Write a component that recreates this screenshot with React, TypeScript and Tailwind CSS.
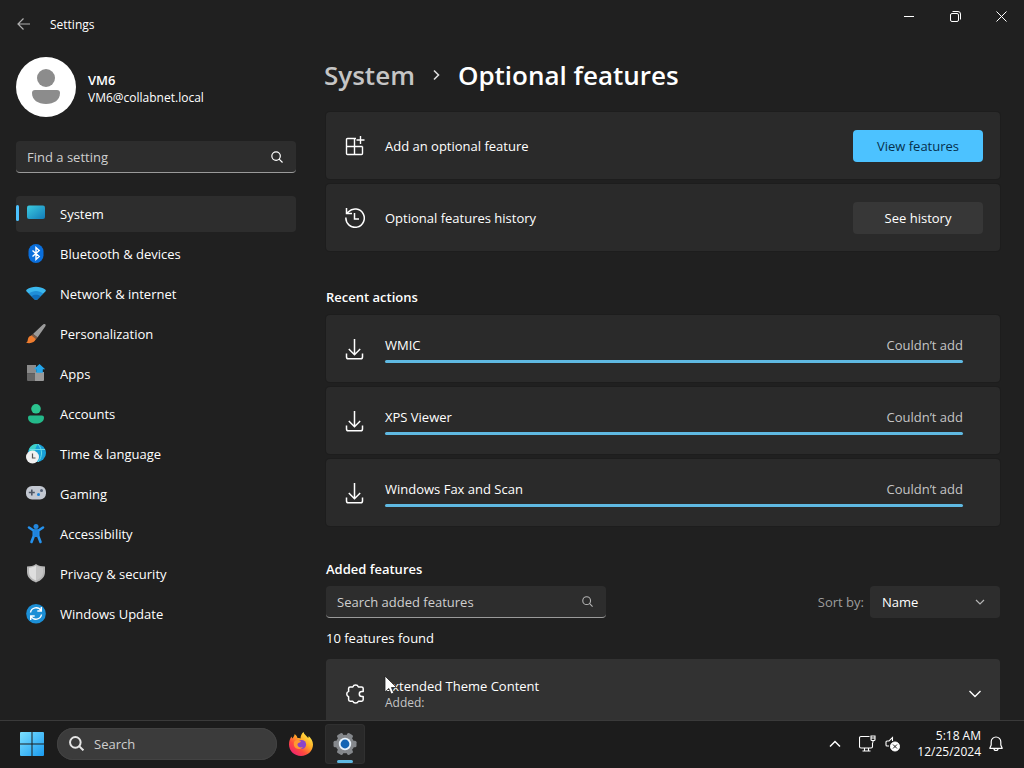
import { useState } from "react";
import type { ReactNode } from "react";

const navItems: { label: string; icon: ReactNode }[] = [
  { label: "System", icon: <SystemIcon /> },
  { label: "Bluetooth & devices", icon: <BluetoothIcon /> },
  { label: "Network & internet", icon: <NetworkIcon /> },
  { label: "Personalization", icon: <BrushIcon /> },
  { label: "Apps", icon: <AppsIcon /> },
  { label: "Accounts", icon: <AccountsIcon /> },
  { label: "Time & language", icon: <TimeIcon /> },
  { label: "Gaming", icon: <GamingIcon /> },
  { label: "Accessibility", icon: <AccessibilityIcon /> },
  { label: "Privacy & security", icon: <ShieldIcon /> },
  { label: "Windows Update", icon: <UpdateIcon /> },
];

const recentActions = ["WMIC", "XPS Viewer", "Windows Fax and Scan"];

export default function App() {
  return (
    <div className="relative flex h-screen flex-col overflow-hidden bg-[#202020] font-['Open_Sans','Noto_Sans',sans-serif] text-[13px] leading-5 text-white">
      <TitleBar />
      <div className="flex min-h-0 flex-1 gap-[30px] overflow-hidden pr-6">
        <Sidebar />
        <OptionalFeatures />
      </div>
      <Taskbar />
    </div>
  );
}

function TitleBar() {
  return (
    <header className="flex h-12 shrink-0 items-center">
      <button aria-label="Back" className="ml-1 flex h-10 w-10 items-center justify-center text-[#b0b0b0]">
        <svg width="14" height="14" viewBox="0 0 14 14" fill="none" stroke="currentColor" strokeWidth="1.2">
          <path d="M13 7H1M6.500 1.500L1 7l5.500 5.500" />
        </svg>
      </button>
      <span className="ml-[6px] pt-[2px] text-xs">Settings</span>
      <div className="ml-auto flex self-start">
        <button aria-label="Minimize" className="flex h-8 w-[46px] items-center justify-center">
          <svg width="11" height="11" viewBox="0 0 11 11" stroke="#fff">
            <path d="M0 5.500h10" />
          </svg>
        </button>
        <button aria-label="Restore" className="flex h-8 w-[46px] items-center justify-center">
          <svg width="11" height="11" viewBox="0 0 11 11" fill="none" stroke="#fff">
            <rect x="0.500" y="2.500" width="8" height="8" rx="1.500" />
            <path d="M2.500 .5h5.500a2.500 2.500 0 0 1 2.500 2.500v5.500" />
          </svg>
        </button>
        <button aria-label="Close" className="flex h-8 w-[46px] items-center justify-center">
          <svg width="11" height="11" viewBox="0 0 11 11" stroke="#fff">
            <path d="M.5 .5l10 10M10.500 .5l-10 10" />
          </svg>
        </button>
      </div>
    </header>
  );
}

function Sidebar() {
  const [active, setActive] = useState("System");

  return (
    <aside className="flex w-[296px] shrink-0 flex-col pl-4 pt-[9px]">
      <div className="flex items-center gap-3">
        <svg width="60" height="60" viewBox="0 0 60 60">
          <circle cx="30" cy="30" r="30" fill="#fff" />
          <circle cx="30" cy="21" r="9" fill="#8c8c8c" />
          <path d="M19 33h22a3 3 0 0 1 3 3c0 7-6 11-14 11s-14-4-14-11a3 3 0 0 1 3-3z" fill="#8c8c8c" />
        </svg>
        <div className="pt-[2px]">
          <p className="font-semibold">VM6</p>
          <p className="text-xs">VM6@collabnet.local</p>
        </div>
      </div>

      <SearchBox label="Find a setting" iconSize={12} className="mt-6 text-white" />

      <nav className="mt-[23px] flex flex-col gap-1">
        {navItems.map((item) => (
          <a
            key={item.label}
            href="#"
            onClick={() => setActive(item.label)}
            aria-current={active === item.label ? "page" : undefined}
            className={`relative flex h-9 items-center gap-[14px] rounded pl-[10px] ${
              active === item.label ? "bg-[#2d2d2d]" : "hover:bg-[#292929]"
            }`}
          >
            {active === item.label && (
              <span className="absolute left-0 top-[9px] h-4 w-[3px] rounded-full bg-[#4cc2ff]" />
            )}
            {item.icon}
            {item.label}
          </a>
        ))}
      </nav>
    </aside>
  );
}

function SearchBox({ label, iconSize, className }: { label: string; iconSize: number; className: string }) {
  return (
    <label
      className={`flex h-8 items-center rounded border-b border-[#9a9a9a] bg-[#2d2d2d] pl-[11px] ${className}`}
    >
      <input
        aria-label={label}
        placeholder={label}
        className="min-w-0 flex-1 bg-transparent text-white outline-none placeholder:text-[#cfcfcf]"
      />
      <MagnifierIcon size={iconSize} />
    </label>
  );
}

function OptionalFeatures() {
  const [sort, setSort] = useState("Name");

  return (
    <main className="flex min-w-0 flex-1 flex-col pt-[9px]">
      <h1 className="-ml-[2px] flex items-center text-[26px] font-semibold leading-9">
        <a href="#" className="text-[#c5c5c5]">
          System
        </a>
        <svg className="mx-[17px]" width="9" height="12" viewBox="0 0 9 12" fill="none" stroke="#ddd" strokeWidth="1.600">
          <path d="M2 1.500L6.500 6 2 10.500" />
        </svg>
        Optional features
      </h1>

      <section className="mt-[19px] flex flex-col gap-[5px]">
        <Card>
          <AddFeatureIcon />
          <span className="flex-1">Add an optional feature</span>
          <button className="h-8 w-[130px] rounded bg-[#4cc2ff] text-[#06304d]">View features</button>
        </Card>
        <Card>
          <HistoryIcon />
          <span className="flex-1">Optional features history</span>
          <button className="h-8 w-[130px] rounded bg-[#373737]">See history</button>
        </Card>
      </section>

      <h2 className="mt-[36px] font-semibold">Recent actions</h2>
      <section className="mt-2 flex flex-col gap-[5px]">
        {recentActions.map((name) => (
          <Card key={name}>
            <DownloadIcon />
            <div className="mr-5 flex-1">
              <div className="flex justify-between">
                <span>{name}</span>
                <span className="text-[#c5c5c5]">Couldn’t add</span>
              </div>
              <div className="mt-[5px] h-[3px] rounded-full bg-[#5fb9e2]" />
            </div>
          </Card>
        ))}
      </section>

      <h2 className="mt-[33px] font-semibold">Added features</h2>
      <div className="mt-[7px] flex items-center justify-between">
        <SearchBox label="Search added features" iconSize={11} className="w-[280px] text-[#b5b5b5]" />
        <div className="flex items-center gap-[6px]">
          <label htmlFor="sort" className="text-[#9d9d9d]">
            Sort by:
          </label>
          <div className="relative">
            <select
              id="sort"
              value={sort}
              onChange={(e) => setSort(e.target.value)}
              className="h-8 w-[130px] appearance-none rounded bg-[#2d2d2d] pl-3 outline-none"
            >
              <option>Name</option>
              <option>Size</option>
              <option>Date added</option>
            </select>
            <svg
              className="pointer-events-none absolute right-[15px] top-3"
              width="10"
              height="8"
              viewBox="0 0 10 8"
              fill="none"
              stroke="#b5b5b5"
              strokeWidth="1.200"
            >
              <path d="M1 2l4 4 4-4" />
            </svg>
          </div>
        </div>
      </div>
      <p className="mt-[10px]">10 features found</p>

      <div className="relative mt-[11px]">
        <button
          aria-expanded="false"
          className="flex h-[70px] w-full items-center gap-5 rounded bg-[#323232] pl-[19px] pr-[18px] text-left"
        >
          <PuzzleIcon />
          <span className="flex flex-1 flex-col">
            <span className="leading-[18px]">Extended Theme Content</span>
            <span className="text-xs text-[#c5c5c5]">Added:</span>
          </span>
          <svg width="14" height="10" viewBox="0 0 14 10" fill="none" stroke="#fff" strokeWidth="1.400">
            <path d="M1.500 2L7 7.500 12.500 2" />
          </svg>
        </button>
        <Cursor />
      </div>
    </main>
  );
}

function Card({ children }: { children: ReactNode }) {
  return (
    <div className="flex h-[67px] items-center gap-5 rounded bg-[#2a2a2a] pl-[19px] pr-[17px] shadow-[0_0_0_1px_#1d1d1d]">
      {children}
    </div>
  );
}

function Taskbar() {
  return (
    <footer className="z-10 flex h-12 shrink-0 items-center border-t border-[#3a3a3a] bg-[#1c1c1c] pb-[2px] pl-3 pr-[21px]">
      <button aria-label="Start" className="flex h-10 w-10 items-center justify-center">
        <svg width="24" height="24" viewBox="0 0 24 24">
          <defs>
            <linearGradient id="start" x1="0" y1="0" x2="1" y2="1">
              <stop offset="0" stopColor="#7be0ff" />
              <stop offset="1" stopColor="#1a9bf0" />
            </linearGradient>
          </defs>
          <path fill="url(#start)" d="M1 0h10.500v11.500H0V1a1 1 0 0 1 1-1zM12.500 0H23a1 1 0 0 1 1 1v10.500H12.500zM0 12.500h11.500V24H1a1 1 0 0 1-1-1zM12.500 12.500H24V23a1 1 0 0 1-1 1H12.500z" />
        </svg>
      </button>
      <label className="ml-[5px] flex h-8 w-[220px] items-center gap-[10px] rounded-full bg-[#3b3b3b] pl-3 text-[#e5e5e5] shadow-[inset_0_0_0_1px_#424242]">
        <MagnifierIcon size={15} strokeWidth={1.7} />
        <input
          aria-label="Search"
          placeholder="Search"
          className="min-w-0 flex-1 bg-transparent outline-none placeholder:text-[#cfcfcf]"
        />
      </label>
      <div className="ml-1 flex gap-1">
        <button aria-label="Firefox" className="flex h-10 w-10 items-center justify-center">
          <FirefoxIcon />
        </button>
        <button
          aria-label="Settings"
          className="relative flex h-10 w-10 items-center justify-center rounded bg-[#292929] shadow-[inset_0_0_0_1px_#303030]"
        >
          <GearIcon />
          <span className="absolute bottom-[1px] left-3 h-[3px] w-4 rounded-full bg-[#5fb9e2]" />
        </button>
      </div>

      <div className="ml-auto flex items-center">
        <button aria-label="Show hidden icons" className="mr-[18px]">
          <svg width="12" height="8" viewBox="0 0 12 8" fill="none" stroke="#fff" strokeWidth="1.500">
            <path d="M1 6.500l5-5 5 5" />
          </svg>
        </button>
        <button aria-label="Network and volume" className="mr-4 flex items-center gap-[9px]">
          <svg width="17" height="17" viewBox="0 0 17 17" fill="none" stroke="#fff" strokeWidth="1.100">
            <path d="M10.500 1.500H2a1.500 1.500 0 0 0-1.500 1.500v8.500A1.500 1.500 0 0 0 2 13h10a1.500 1.500 0 0 0 1.500-1.500V7.500M5.500 13v3M9.500 13v3M3.500 16h8" />
            <path d="M12 1h4v3.500a1 1 0 0 1-1 1h-2a1 1 0 0 1-1-1zM12 3h4M14 5.500v2" />
          </svg>
          <svg width="16" height="16" viewBox="0 0 16 16" fill="none" stroke="#fff">
            <path d="M7.500 5V1.500L4 5H2a1 1 0 0 0-1 1v3a1 1 0 0 0 1 1h2" strokeWidth="1.100" />
            <circle cx="10" cy="10.500" r="4.500" fill="#fff" />
            <path d="M8 8.500l4 4M12 8.500l-4 4" stroke="#1c1c1c" />
          </svg>
        </button>
        <div className="mr-2 text-right text-xs">
          <p className="leading-4">5:18 AM</p>
          <p className="leading-4">12/25/2024</p>
        </div>
        <button aria-label="Notifications">
          <svg width="14" height="16" viewBox="0 0 14 16" fill="none" stroke="#fff" strokeWidth="1.200" strokeLinejoin="round">
            <path d="M7 1a4.800 4.800 0 0 0-4.800 4.800V9L.8 12.300h12.400L11.800 9V5.800A4.800 4.800 0 0 0 7 1zM5 12.500a2 2 0 0 0 4 0" />
          </svg>
        </button>
      </div>
    </footer>
  );
}

/* ---------- icons ---------- */

function MagnifierIcon({ size, strokeWidth = 1.3 }: { size: number; strokeWidth?: number }) {
  return (
    <svg
      className="mr-[10px] shrink-0 last:mr-[13px] first:mr-0"
      width={size}
      height={size}
      viewBox="0 0 13 13"
      fill="none"
      stroke="currentColor"
      strokeWidth={strokeWidth}
    >
      <circle cx="5.500" cy="5.500" r="4.600" />
      <path d="M8.800 8.800l3.700 3.700" />
    </svg>
  );
}

function AddFeatureIcon() {
  return (
    <svg width="20" height="20" viewBox="0 0 20 20" fill="none" stroke="#fff" strokeWidth="1.400">
      <path d="M11 2.500H2.500a1 1 0 0 0-1 1v14a1 1 0 0 0 1 1h14a1 1 0 0 0 1-1V10.500M1.500 10.500h16M9.500 2.500v16M15.500 0v8M11.500 4h8" />
    </svg>
  );
}

function HistoryIcon() {
  return (
    <svg width="20" height="20" viewBox="0 0 20 20" fill="none" stroke="#fff" strokeWidth="1.500">
      <path d="M.9 9.500A9.200 9.200 0 1 0 3.500 3.700L1.500 5.500M1.500 0v5.500H7M9.500 5v6h4.500" />
    </svg>
  );
}

function DownloadIcon() {
  return (
    <svg width="20" height="22" viewBox="0 0 20 22" fill="none" stroke="#fff" strokeWidth="1.500">
      <path d="M9.500 1v15.500M3.800 11l5.700 5.700 5.700-5.700M1.500 15.500V19a1.800 1.800 0 0 0 1.800 1.800h12.400a1.800 1.800 0 0 0 1.800-1.800v-3.500" />
    </svg>
  );
}

function PuzzleIcon() {
  return (
    <svg width="20" height="22" viewBox="0 0 20 22" fill="none" stroke="#fff" strokeWidth="1.500" strokeLinejoin="round">
      <path d="M5.200 4h2.600a3 3 0 0 1 5.600 0h3.200A1.600 1.600 0 0 1 18.200 5.600v3h-1.400a2.500 2.500 0 0 0 0 5h1.400v3a1.600 1.600 0 0 1-1.600 1.600h-3.200a3 3 0 0 1-5.600 0H5.200a1.600 1.600 0 0 1-1.600-1.600v-2.800a2.900 2.900 0 0 1 0-5.400V5.600A1.600 1.600 0 0 1 5.200 4z" />
    </svg>
  );
}

function Cursor() {
  return (
    <svg className="pointer-events-none absolute left-[58px] top-4" width="14" height="20" viewBox="0 0 14 20">
      <path d="M1 1v16l3.800-3.500 2.400 5.500 2.600-1.100-2.400-5.400h5.100z" fill="#fff" stroke="#222" strokeWidth=".8" />
    </svg>
  );
}

function SystemIcon() {
  return (
    <svg width="20" height="20" viewBox="0 0 20 20">
      <defs>
        <linearGradient id="screen" x1="0" y1="0" x2="1" y2="1">
          <stop offset="0" stopColor="#3ccbe0" />
          <stop offset="1" stopColor="#127bb8" />
        </linearGradient>
      </defs>
      <rect x="1" y="1.500" width="18" height="13.500" rx="2" fill="url(#screen)" />
    </svg>
  );
}

function BluetoothIcon() {
  return (
    <svg width="20" height="20" viewBox="0 0 20 20">
      <rect x="2.500" y="0" width="15" height="19" rx="7.500" fill="#0a6fdc" />
      <path d="M6.500 6.500l6.700 6-3.200 3V3.500l3.200 3-6.700 6" fill="none" stroke="#fff" strokeWidth="1.400" />
    </svg>
  );
}

function NetworkIcon() {
  return (
    <svg width="20" height="20" viewBox="0 0 20 20">
      <path d="M.8 5.500C6 1.800 14 1.800 19.200 5.500c.8.600.8 1.300.2 2l-8.200 8c-.8.800-1.600.800-2.400 0L.6 7.500C0 6.800 0 6.100.8 5.500z" fill="#3bb8ee" />
      <path d="M2.800 9.500c4.200-3.400 10.200-3.400 14.400 0l-6 6c-.8.800-1.600.800-2.400 0z" fill="#1f8fd8" />
      <path d="M5.600 12.200c2.600-1.900 6.200-1.900 8.800 0l-3.200 3.300c-.8.800-1.600.8-2.400 0z" fill="#0f6fbd" />
    </svg>
  );
}

function BrushIcon() {
  return (
    <svg width="20" height="20" viewBox="0 0 20 20">
      <path d="M18.500 0c1.500 0 1.400 1.500.7 2.600L11.500 13.500 7 10 16.500 1c.5-.5 1.300-1 2-1z" fill="#9b9b9b" />
      <path d="M7 10l4.500 3.500L9.500 16l-5-4z" fill="#7d5c48" />
      <path d="M5.500 11.500l4.200 3.500C9 18.500 5 19.800 0 18.800c2-.8 1.500-2.300 2-4 .5-1.800 1.800-3 3.500-3.300z" fill="#ef7d2f" />
    </svg>
  );
}

function AppsIcon() {
  return (
    <svg width="20" height="20" viewBox="0 0 20 20">
      <path d="M1 1h9v8.500H1z" fill="#8b8b8b" />
      <path d="M1 9.500h8V17H2a1 1 0 0 1-1-1z" fill="#666" />
      <path d="M9 8h9v8a1 1 0 0 1-1 1H9z" fill="#9a9a9a" />
      <path d="M13.500 0l5.700 5.200h-2.400v3.500h-6.600V5.200H7.800z" fill="#23a6eb" />
    </svg>
  );
}

function AccountsIcon() {
  return (
    <svg width="20" height="20" viewBox="0 0 20 20">
      <circle cx="10" cy="4.800" r="4.800" fill="#2bc48f" />
      <path d="M4 11.500h12a2 2 0 0 1 2 2c0 4-3.500 6-8 6s-8-2-8-6a2 2 0 0 1 2-2z" fill="#24b98a" />
    </svg>
  );
}

function TimeIcon() {
  return (
    <svg width="20" height="20" viewBox="0 0 20 20">
      <circle cx="11" cy="9" r="9" fill="#18a0d8" />
      <path d="M3 5a9 9 0 0 1 9-5c-2 2-3 5-3 8H3z" fill="#3fd0c8" />
      <path d="M12 0c2.500 3 3.500 6 3.500 9s-1 6-3.500 9M4 5.500h15" fill="none" stroke="#69ddea" />
      <circle cx="6.500" cy="13" r="6.500" fill="#f0f0f0" />
      <path d="M6.500 9.500V14h3" fill="none" stroke="#555" strokeWidth="1.200" />
    </svg>
  );
}

function GamingIcon() {
  return (
    <svg width="20" height="20" viewBox="0 0 20 20">
      <rect y="2" width="20" height="13.500" rx="6" fill="#c3c8d1" />
      <path d="M5.800 5.500v6M2.800 8.500h6" stroke="#4d5664" strokeWidth="1.600" />
      <circle cx="15.500" cy="6.500" r="1.500" fill="#536075" />
      <circle cx="12.500" cy="10.500" r="1.500" fill="#1d83d9" />
    </svg>
  );
}

function AccessibilityIcon() {
  return (
    <svg width="20" height="20" viewBox="0 0 20 20">
      <circle cx="10" cy="2.500" r="2.500" fill="#2387dd" />
      <path d="M3 3.500l4.500 3h5l4.500-3M7.800 7v5L5.500 18M12.200 7v5l2.300 6" fill="none" stroke="#2593ef" strokeWidth="2.600" strokeLinecap="round" strokeLinejoin="round" />
      <path d="M7.500 6h5v7h-5z" fill="#1f83dc" />
    </svg>
  );
}

function ShieldIcon() {
  return (
    <svg width="20" height="20" viewBox="0 0 20 20">
      <path d="M10 0c2.500 1.800 5.500 2.500 9 2.500V8c0 5-3.500 8.400-9 10.400C4.500 16.400 1 13 1 8V2.500C4.500 2.500 7.500 1.800 10 0z" fill="#b5b5b5" />
      <path d="M10 1.500c2.200 1.400 4.500 2.100 7 2.300v4.400c0 3.800-2.500 6.300-7 8.200z" fill="#c4c4c4" />
      <path d="M10 1.500C7.800 2.900 5.500 3.600 3 3.800v4.400c0 3.800 2.500 6.300 7 8.200z" fill="#dedede" />
    </svg>
  );
}

function UpdateIcon() {
  return (
    <svg width="20" height="20" viewBox="0 0 20 20">
      <circle cx="10" cy="9.800" r="9.800" fill="#1c8fd6" />
      <path d="M4.500 8.500a5.700 5.700 0 0 1 10.500-2M15.500 10.500a5.700 5.700 0 0 1-10.500 2M15.300 3v4h-4M4.700 16v-4h4" fill="none" stroke="#fff" strokeWidth="1.400" />
    </svg>
  );
}

function FirefoxIcon() {
  return (
    <svg width="24" height="24" viewBox="0 0 24 24">
      <defs>
        <linearGradient id="fox" x1="0.850" y1="0.050" x2="0.150" y2="0.900">
          <stop offset="0" stopColor="#fff04a" />
          <stop offset="0.400" stopColor="#ffa726" />
          <stop offset="0.700" stopColor="#ff4b3e" />
          <stop offset="1" stopColor="#f0246e" />
        </linearGradient>
      </defs>
      <path d="M14.500 0c.5 2.500 3 3.700 4.700 6 .4-.7.500-1.300.4-2C22 6 24 9 24 12.500 24 19 18.600 24 12 24S0 19 0 12.500C0 9 1 6.500 2.700 4.500c0 .8.200 1.400.6 2C4.500 5 5.500 3.500 5.700 2c1.500 1.200 2.300 2.400 2.800 4 1 0 2 .1 3 .6C11.500 4 12.500 1.500 14.500 0z" fill="url(#fox)" />
      <circle cx="12.500" cy="12.500" r="4.600" fill="#8a45c9" />
      <path d="M6 8.800c2-1.500 4.500-1 6 .7-1 1.500-3 1.300-3.500 2.500-.3 3 2.500 4.300 5.500 3.100-2 3-7.500 2.700-9-1.300-.4-2-.3-3.800 1-5z" fill="#ff9a30" />
    </svg>
  );
}

function GearIcon() {
  return (
    <svg width="24" height="24" viewBox="0 0 24 24">
      {[30, 90, 150].map((deg) => (
        <rect key={deg} x="8.800" y="0.500" width="6.400" height="23" rx="1.500" fill="#85888c" transform={`rotate(${deg} 12 12)`} />
      ))}
      <circle cx="12" cy="12" r="9.200" fill="#85888c" />
      <circle cx="12" cy="12" r="6.200" fill="#e8f2fb" />
      <circle cx="12" cy="12" r="4.400" fill="#1464b4" />
    </svg>
  );
}
